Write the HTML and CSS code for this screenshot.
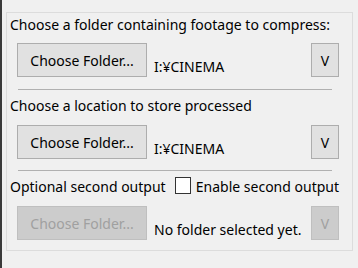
FILE: index.html
```
<!DOCTYPE html>
<html lang="en">

<head>
    <meta charset="UTF-8">
    <title>Compress footage</title>
    <link rel="stylesheet" href="styles.css">
</head>

<body>
    <div class="panel">
        <div class="title first">Choose a folder containing footage to compress:</div>
        <div class="row">
            <button class="btn folder">Choose Folder...</button>
            <span class="path">I:¥CINEMA</span>
            <button class="btn small">V</button>
        </div>
        <div class="sep"></div>

        <div class="title">Choose a location to store processed</div>
        <div class="row">
            <button class="btn folder">Choose Folder...</button>
            <span class="path">I:¥CINEMA</span>
            <button class="btn small">V</button>
        </div>
        <div class="sep second"></div>

        <div class="title check-row">
            <span class="opt-label">Optional second output</span>
            <label class="check">
                <span class="box"></span>
                <span>Enable second output</span>
            </label>
        </div>
        <div class="row">
            <button class="btn folder" disabled>Choose Folder...</button>
            <span class="path">No folder selected yet.</span>
            <button class="btn small" disabled>V</button>
        </div>
    </div>
</body>

</html>
```

FILE: styles.css
```
body {
    margin: 0;
    height: 268px;
    background-color: #f0f0f0;
    border-left: 2px solid #3a3a3a;
    font-family: "Noto Sans", "Open Sans", sans-serif;
    font-size: 14px;
    color: #000;
    overflow: hidden;
}

.panel {
    box-sizing: border-box;
    margin: 12px 0 0 4px;
    width: 347px;
    height: 239px;
    padding: 2px 13px 0 3px;
    border: 1px solid #dcdcdc;
}

.title {
    line-height: 20px;
    margin-top: 6px;
    white-space: nowrap;
}

.title.first {
    margin-top: 0;
}

.row {
    display: flex;
    align-items: flex-start;
    margin-top: 9px;
    padding-left: 7px;
}

.title.first + .row {
    margin-top: 8px;
}

.btn {
    box-sizing: border-box;
    height: 34px;
    padding: 0;
    border: 1px solid #adadad;
    background-color: #e1e1e1;
    font-family: inherit;
    font-size: 14px;
    color: #000;
}

.btn:disabled {
    background-color: #cccccc;
    border-color: #bfbfbf;
    color: #a0a0a0;
}

.btn.folder {
    width: 130px;
}

.btn.small {
    width: 28px;
    margin-left: auto;
}

.path {
    margin: 14px 0 0 7px;
    line-height: 20px;
    white-space: nowrap;
}

.sep {
    margin: 12px 7px 0 8px;
    height: 1px;
    background-color: #b0b0b0;
}

.sep.second {
    margin-top: 11px;
}

.check-row {
    display: flex;
}

.opt-label {
    width: 167px;
}

.check {
    display: flex;
    align-items: flex-start;
    gap: 5px;
}

.box {
    box-sizing: border-box;
    width: 16px;
    height: 17px;
    border: 1px solid #333;
    background-color: #fff;
}
```
